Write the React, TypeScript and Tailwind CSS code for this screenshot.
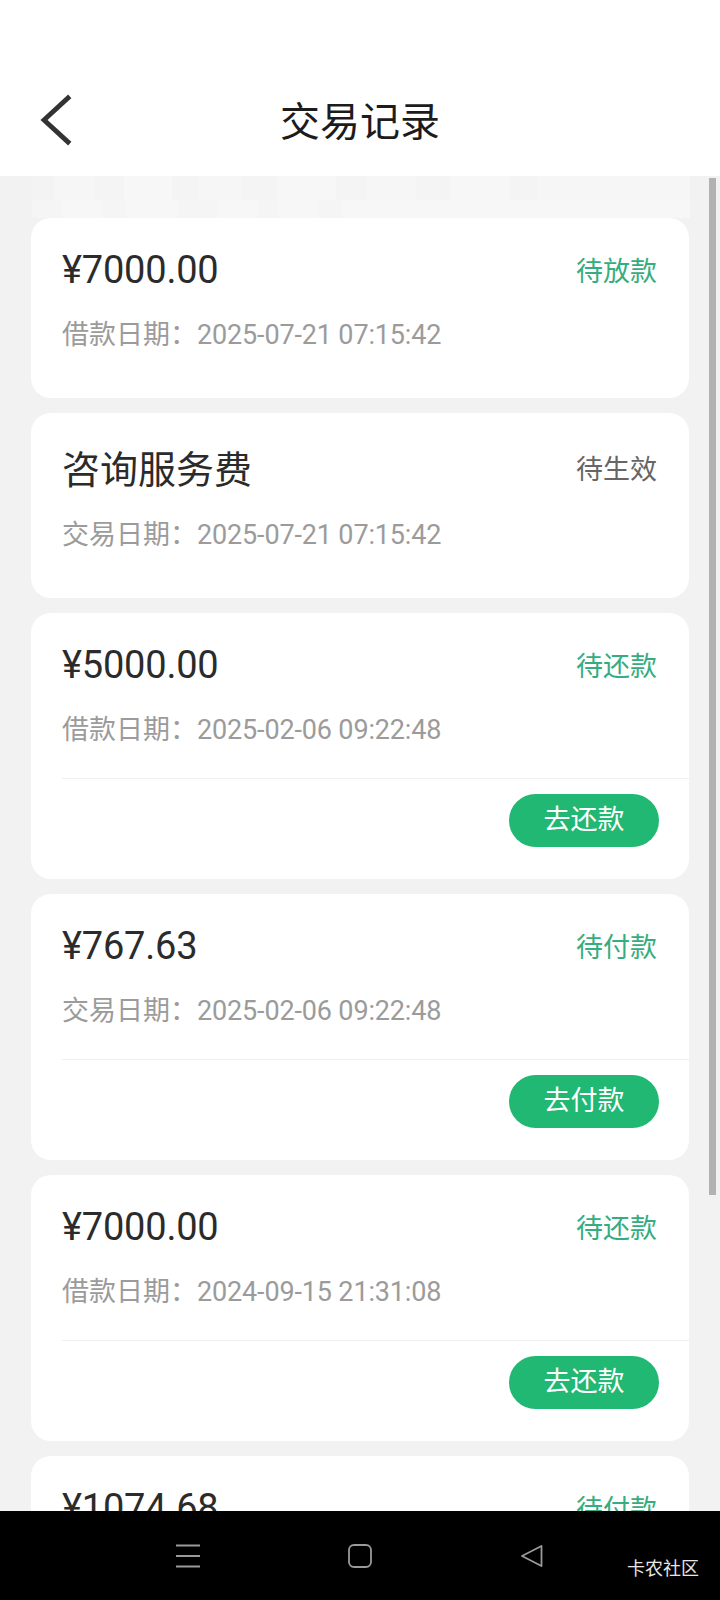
import React from "react";

type Rec = {
  title: string;
  big?: boolean;
  status: string;
  statusGreen: boolean;
  label: string;
  date: string;
  action?: string;
};

const records: Rec[] = [
  { title: "¥7000.00", status: "待放款", statusGreen: true, label: "借款日期：", date: "2025-07-21 07:15:42" },
  { title: "咨询服务费", big: true, status: "待生效", statusGreen: false, label: "交易日期：", date: "2025-07-21 07:15:42" },
  { title: "¥5000.00", status: "待还款", statusGreen: true, label: "借款日期：", date: "2025-02-06 09:22:48", action: "去还款" },
  { title: "¥767.63", status: "待付款", statusGreen: true, label: "交易日期：", date: "2025-02-06 09:22:48", action: "去付款" },
  { title: "¥7000.00", status: "待还款", statusGreen: true, label: "借款日期：", date: "2024-09-15 21:31:08", action: "去还款" },
  { title: "¥1074.68", status: "待付款", statusGreen: true, label: "交易日期：", date: "2024-09-15 21:31:08", action: "去付款" },
];

function Card({ r }: { r: Rec }) {
  return (
    <div className="bg-white rounded-[20px] pl-[31px] pt-[26px] shrink-0">
      <div
        className={
          "flex items-center justify-between pr-[32px] " + (r.big ? "h-[57px]" : "h-[52px]")
        }
      >
        <span
          className={
            r.big
              ? "text-[38px] leading-none text-[#2b2b2b] translate-y-[2px]"
              : "text-[38px] leading-none text-[#2b2b2b] tracking-[-0.2px]"
          }
        >
          {r.title}
        </span>
        <span
          className={
            r.statusGreen
              ? "text-[27px] leading-none text-[#35ad80] translate-y-[2px]"
              : "text-[27px] leading-none text-[#666666] translate-y-[3px]"
          }
        >
          {r.status}
        </span>
      </div>
      <div className="mt-[20px] h-[38px] flex items-center text-[27px] leading-none text-[#9b9b9b]">
        <span>{r.label}</span>
        <span className="tracking-[-0.15px]">{r.date}</span>
      </div>
      {r.action ? (
        <>
          <div className="mt-[29px] h-px bg-[#efefef]" />
          <div className="pt-[15px] pb-[32px] pr-[30px] flex justify-end">
            <button className="w-[150px] h-[53px] rounded-full bg-[#20b873] text-white text-[27px] leading-none flex items-center justify-center">
              {r.action}
            </button>
          </div>
        </>
      ) : (
        <div className="h-[44px]" />
      )}
    </div>
  );
}

export default function App() {
  return (
    <div className="relative w-[720px] h-[1600px] overflow-hidden bg-[#f2f2f2] flex flex-col font-[Roboto,'Noto_Sans_CJK_SC',sans-serif]">
      <header className="h-[176px] bg-white flex flex-col shrink-0">
        <div className="h-[64px]" />
        <div className="h-[112px] grid grid-cols-[1fr_auto_1fr] items-center">
          <div className="pl-[38px] flex items-center">
            <svg width="34" height="52" viewBox="0 0 34 52" fill="none">
              <path d="M30 4 L6 26 L30 48" stroke="#333333" strokeWidth="4.8" strokeLinecap="square" strokeLinejoin="miter" />
            </svg>
          </div>
          <h1 className="text-[40px] leading-none text-[#1c1c1c] font-normal translate-y-[3px]">交易记录</h1>
          <div />
        </div>
      </header>

      <main className="relative flex-1 overflow-hidden">
        <div className="h-[42px] pl-[32px] pr-[30px] flex flex-col">
          <div className="h-[24px] flex">
            <div className="w-[22px] bg-[#f3f3f3]" />
            <div className="w-[40px] bg-[#f6f6f6]" />
            <div className="w-[30px] bg-[#f4f4f4]" />
            <div className="w-[48px] bg-[#f7f7f7]" />
            <div className="w-[26px] bg-[#f4f4f4]" />
            <div className="w-[44px] bg-[#f6f6f6]" />
            <div className="w-[36px] bg-[#f4f4f4]" />
            <div className="w-[58px] bg-[#f7f7f7]" />
            <div className="w-[30px] bg-[#f4f4f4]" />
            <div className="w-[50px] bg-[#f6f6f6]" />
            <div className="w-[34px] bg-[#f4f4f4]" />
            <div className="w-[60px] bg-[#f7f7f7]" />
            <div className="w-[28px] bg-[#f4f4f4]" />
            <div className="flex-1 bg-[#f6f6f6]" />
          </div>
          <div className="h-[18px] flex">
            <div className="w-[30px] bg-[#f5f5f5]" />
            <div className="w-[40px] bg-[#f7f7f7]" />
            <div className="w-[24px] bg-[#f5f5f5]" />
            <div className="w-[52px] bg-[#f7f7f7]" />
            <div className="w-[40px] bg-[#f5f5f5]" />
            <div className="w-[40px] bg-[#f7f7f7]" />
            <div className="w-[20px] bg-[#f5f5f5]" />
            <div className="w-[40px] bg-[#f7f7f7]" />
            <div className="w-[24px] bg-[#f5f5f5]" />
            <div className="flex-1 bg-[#f7f7f7]" />
          </div>
        </div>
        <div className="px-[31px] flex flex-col gap-[15px]">
          {records.map((r, i) => (
            <Card key={i} r={r} />
          ))}
        </div>
        <div className="absolute left-[709px] top-[2px] w-[7px] h-[1017px] bg-[#b2b2b2]" />
      </main>

      <nav className="relative h-[89px] bg-black shrink-0 flex items-center pl-[176px] gap-[148px]">
        <svg width="24" height="24" viewBox="0 0 24 24" fill="none">
          <path d="M0 1.5 H24 M0 12 H24 M0 22.5 H24" stroke="#9a9a9a" strokeWidth="1.8" />
        </svg>
        <svg width="24" height="24" viewBox="0 0 24 24" fill="none">
          <rect x="1" y="1" width="22" height="22" rx="5" stroke="#9a9a9a" strokeWidth="1.8" />
        </svg>
        <svg width="24" height="24" viewBox="0 0 24 24" fill="none">
          <path d="M21.5 2 L2 12 L21.5 22 Z" stroke="#9a9a9a" strokeWidth="1.8" strokeLinejoin="round" />
        </svg>
        <span className="absolute left-[627px] top-[49px] text-[18px] leading-none text-[#e6e6e6]">卡农社区</span>
      </nav>
    </div>
  );
}
